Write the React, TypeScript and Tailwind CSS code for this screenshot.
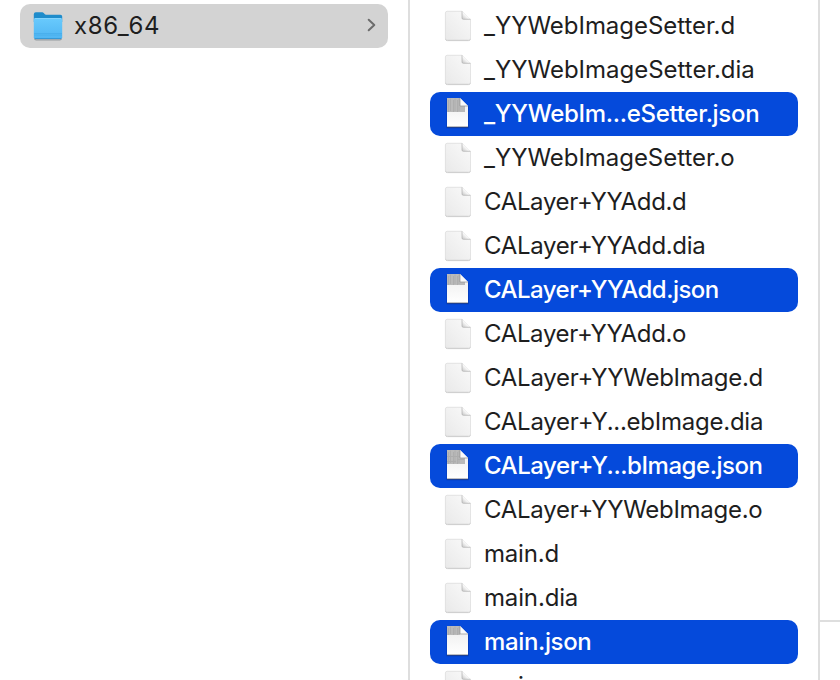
type Preview = 'dense' | 'tall' | 'lines' | 'short';
type FileEntry = { name: string; tracking: string; preview?: Preview };

const files: FileEntry[] = [
  { name: '_YYWebImageSetter.d', tracking: 'tracking-[-0.03px]' },
  { name: '_YYWebImageSetter.dia', tracking: 'tracking-[-0.01px]' },
  { name: '_YYWebIm...eSetter.json', tracking: 'tracking-[-0.3px]', preview: 'dense' },
  { name: '_YYWebImageSetter.o', tracking: 'tracking-[-0.04px]' },
  { name: 'CALayer+YYAdd.d', tracking: 'tracking-[-0.36px]' },
  { name: 'CALayer+YYAdd.dia', tracking: 'tracking-[-0.34px]' },
  { name: 'CALayer+YYAdd.json', tracking: 'tracking-[-0.53px]', preview: 'tall' },
  { name: 'CALayer+YYAdd.o', tracking: 'tracking-[-0.36px]' },
  { name: 'CALayer+YYWebImage.d', tracking: 'tracking-[-0.27px]' },
  { name: 'CALayer+Y...ebImage.dia', tracking: 'tracking-[-0.25px]' },
  { name: 'CALayer+Y...bImage.json', tracking: 'tracking-[-0.45px]', preview: 'lines' },
  { name: 'CALayer+YYWebImage.o', tracking: 'tracking-[-0.28px]' },
  { name: 'main.d', tracking: 'tracking-[-0.2px]' },
  { name: 'main.dia', tracking: 'tracking-[-0.15px]' },
  { name: 'main.json', tracking: 'tracking-[-0.36px]', preview: 'short' },
  { name: 'main.o', tracking: 'tracking-[-0.2px]' },
];

function FolderIcon() {
  return (
    <svg width="32" height="32" viewBox="0 0 32 32" className="shrink-0">
      <defs>
        <linearGradient id="folderFront" x1="0" y1="0" x2="0" y2="1">
          <stop offset="0" stopColor="#69cafd" />
          <stop offset="1" stopColor="#4fb5f2" />
        </linearGradient>
      </defs>
      <path d="M2.5 28.6q.4 1.2 1.6 1.2h23.8q1.2 0 1.6-1.2" fill="none" stroke="#7f888d" strokeWidth="1.2" opacity=".7" />
      <path d="M1.8 4.2Q1.8 2.2 3.8 2.2h6.6c1.5 0 2 2.6 3.8 2.6H28.4Q30.2 4.8 30.2 6.6V12H1.8z" fill="#1f8ccb" />
      <path d="M1.8 9.8Q1.8 8 3.6 8h24.8q1.8 0 1.8 1.8V27.2q0 1.8-1.8 1.8H3.6q-1.8 0-1.8-1.8z" fill="url(#folderFront)" />
      <path d="M2.6 8.5h26.8" stroke="#8ad7fc" strokeWidth=".8" />
      <path d="M2 23.500h28M2 25h28" stroke="#3ca4e4" strokeWidth=".5" />
      <path d="M2.6 28.6h26.8" stroke="#2b8dca" strokeWidth=".8" />
    </svg>
  );
}

function DocumentIcon() {
  return (
    <svg width="28" height="32" viewBox="0 0 28 32" className="shrink-0">
      <defs>
        <linearGradient id="page" x1="1" y1="0" x2="0" y2="1">
          <stop offset="0" stopColor="#fafafa" />
          <stop offset="1" stopColor="#e9e9e9" />
        </linearGradient>
        <linearGradient id="pageFold" x1="0" y1="1" x2="1" y2="0">
          <stop offset="0" stopColor="#c4c4c4" />
          <stop offset=".45" stopColor="#f8f8f8" />
        </linearGradient>
      </defs>
      <path d="M1.5 28.6q0 2 2 2h20.9q2 0 2-2" fill="none" stroke="#c6c6c6" strokeWidth="1" />
      <path d="M1.4 3Q1.4 1.3 3.2 1.3H18L26.5 9.5V28.2q0 1.8-1.8 1.8H3.2q-1.8 0-1.8-1.8z" fill="url(#page)" stroke="#dadada" strokeWidth=".7" />
      <path d="M18 1.3V8q0 1.3 1.3 1.3h7.200z" fill="url(#pageFold)" />
      <path d="M18 1.3V8q0 1.3 1.3 1.3h7.200" fill="none" stroke="#b0b0b0" strokeWidth=".7" />
    </svg>
  );
}

function PreviewIcon({ kind }: { kind: Preview }) {
  const height = kind === 'short' ? 9 : kind === 'tall' ? 11 : 14;
  return (
    <svg width="28" height="32" viewBox="0 0 28 32" className="shrink-0">
      <defs>
        <linearGradient id="previewPage" x1="0" y1="0" x2="0" y2="1">
          <stop offset="0" stopColor="#ececec" />
          <stop offset="1" stopColor="#ffffff" />
        </linearGradient>
      </defs>
      <path d="M2.5 1H16.2L24.7 9V30.3H2.5z" fill="#022a94" opacity=".5" />
      <path d="M3 0H16L24 8V29H3z" fill="url(#previewPage)" />
      <path d={`M3 0H16V8H${kind === 'short' ? 16 : 21}V${height}H3z`} fill="#bababa" />
      {[4.5, 6.5, 9.5, 11, 13.5, 15].map((x, i) => (
        <path key={x} d={`M${x} ${i % 2 ? 0.5 : 2}V${height - (i % 2)}`} stroke="#a2a2a2" strokeWidth=".5" />
      ))}
      {kind === 'lines' && <path d="M3 6.500H16M3 11.500H12M13 9.500H20" stroke="#adadad" strokeWidth="1" />}
      <path d="M16 0L24 8H16z" fill="#fafafa" />
      <path d="M16 0V8H24" fill="none" stroke="#8f8f8f" strokeWidth=".7" />
      <path d="M3 29H24" stroke="#4b4c55" strokeWidth=".7" />
    </svg>
  );
}

function FileRow({ file }: { file: FileEntry }) {
  const selected = file.preview !== undefined;
  return (
    <li className={`flex h-11 shrink-0 items-center rounded-[10px] pl-3.5 ${selected ? 'bg-[#054adb] text-white' : 'text-[#1e1e1e]'}`}>
      {file.preview ? <PreviewIcon kind={file.preview} /> : <DocumentIcon />}
      <span className={`ml-3 whitespace-nowrap text-2xl leading-[44px] ${selected ? 'font-medium' : ''} ${file.tracking}`}>{file.name}</span>
    </li>
  );
}

export default function App() {
  return (
    <main className="flex h-[680px] w-[840px] overflow-hidden bg-white font-['Inter','Liberation_Sans',sans-serif]">
      <section className="w-[410px] shrink-0 border-r-2 border-[#dedede] px-5 pt-1">
        <div className="flex h-11 items-center rounded-[10px] bg-[#d3d3d3] pl-3 pr-[11px] text-[#1e1e1e]">
          <FolderIcon />
          <span className="ml-2.5 text-2xl leading-[44px] tracking-[0.7px]">x86_64</span>
          <svg width="10" height="16" viewBox="0 0 10 16" className="ml-auto mb-0.5" fill="none" stroke="#6c6c6c" strokeWidth="2" strokeLinecap="round" strokeLinejoin="round">
            <path d="M1.7 2.7L7.3 8L1.7 13.3" />
          </svg>
        </div>
      </section>
      <ul className="flex w-[410px] shrink-0 flex-col border-r-2 border-[#dedede] px-5 pt-1">
        {files.map((file) => <FileRow key={file.name} file={file} />)}
      </ul>
      <section className="flex grow flex-col">
        <div className="h-[622px] border-b-2 border-[#dedede]" />
      </section>
    </main>
  );
}
